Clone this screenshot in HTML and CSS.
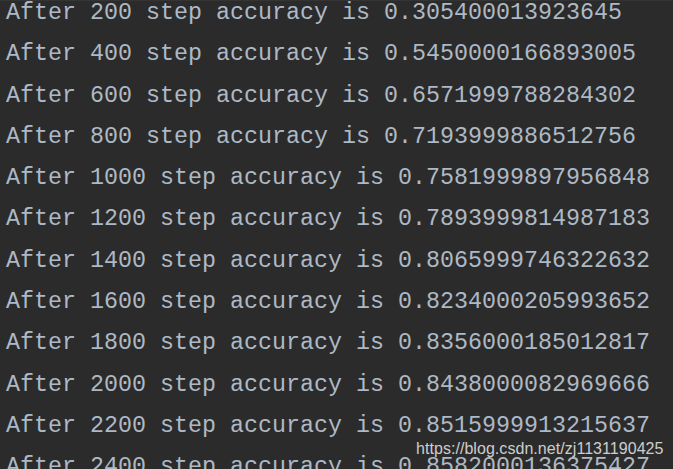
FILE: index.html
```html
<!DOCTYPE html>
<html>
<head>
<meta charset="utf-8">
<link rel="stylesheet" href="styles.css">
</head>
<body>
<div class="console">
<div class="line">After 200 step accuracy is 0.305400013923645</div>
<div class="line">After 400 step accuracy is 0.5450000166893005</div>
<div class="line">After 600 step accuracy is 0.6571999788284302</div>
<div class="line">After 800 step accuracy is 0.7193999886512756</div>
<div class="line">After 1000 step accuracy is 0.7581999897956848</div>
<div class="line">After 1200 step accuracy is 0.7893999814987183</div>
<div class="line">After 1400 step accuracy is 0.8065999746322632</div>
<div class="line">After 1600 step accuracy is 0.8234000205993652</div>
<div class="line">After 1800 step accuracy is 0.8356000185012817</div>
<div class="line">After 2000 step accuracy is 0.8438000082969666</div>
<div class="line">After 2200 step accuracy is 0.8515999913215637</div>
<div class="line">After 2400 step accuracy is 0.8582000136375427</div>
</div>
<div class="watermark">https://blog.csdn.net/zj1131190425</div>
</body>
</html>
```
FILE: styles.css
```css
html, body {
  margin: 0;
  padding: 0;
  background: #2b2b2b;
  width: 673px;
  height: 469px;
  overflow: hidden;
}
body {
  position: relative;
  border-top: 1px solid #343434;
  box-sizing: border-box;
}
.console {
  margin-top: -8px;
  padding-left: 6px;
  font-family: "Liberation Mono", monospace;
  font-size: 23.33px;
  line-height: 41.3px;
  color: #adb9c6;
}
.line {
  white-space: pre;
}
.watermark {
  position: absolute;
  left: 416px;
  top: 439px;
  font-family: "Liberation Sans", Arial, sans-serif;
  font-size: 16px;
  color: rgba(235, 235, 235, 0.85);
  letter-spacing: 0.05px;
}
```
